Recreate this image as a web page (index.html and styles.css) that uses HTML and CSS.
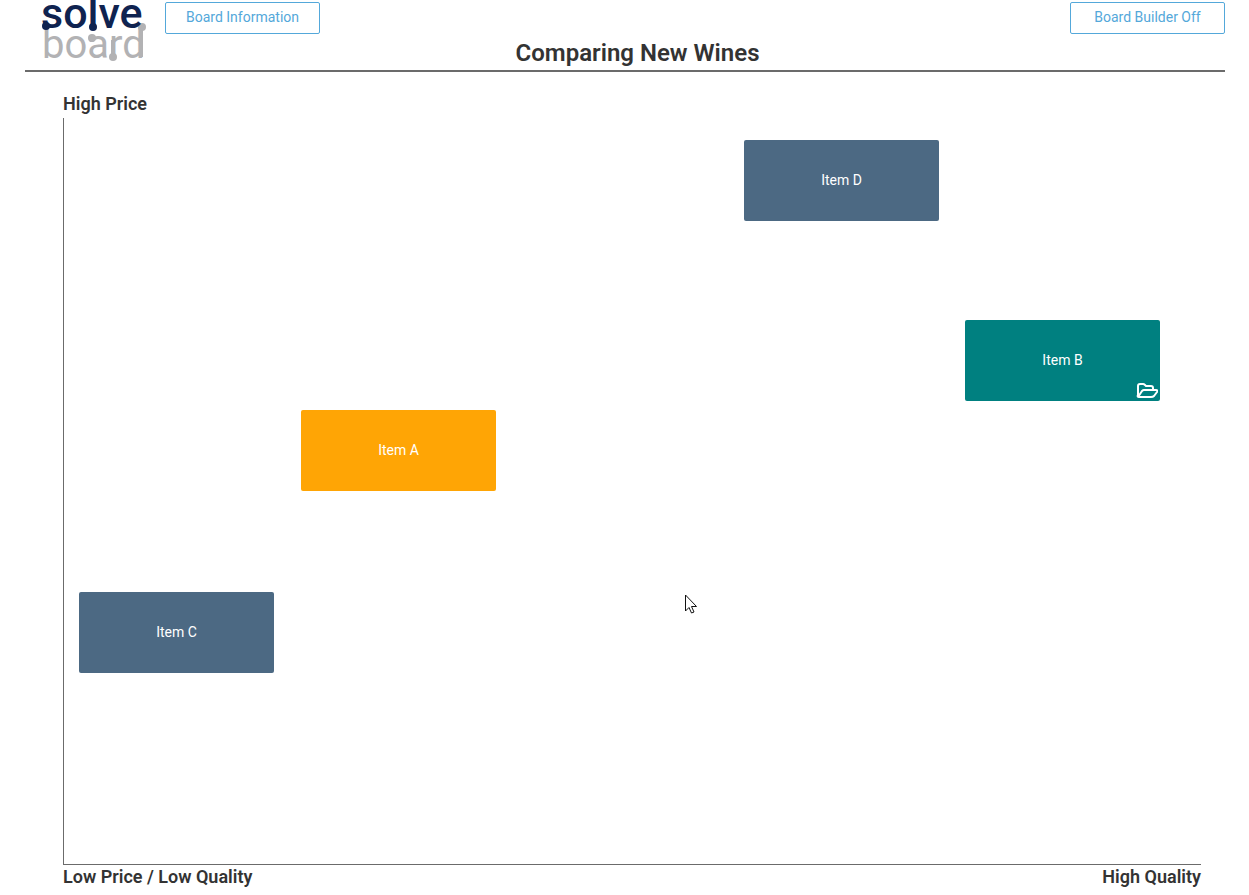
FILE: index.html
```html
<!DOCTYPE html>
<html lang="en">

<head>
    <meta charset="UTF-8">
    <meta name="viewport" content="width=device-width, initial-scale=1.0">
    <title>Comparing New Wines</title>
    <link rel="stylesheet" href="styles.css">
</head>

<body>

    <header class="header">
        <a class="logo" href="#" aria-label="solveboard">
            <svg width="110" height="64" viewBox="0 0 110 64">
                <g class="logo-board">
                    <text x="2" y="58">board</text>
                    <path d="M73 40V57M101 28V57" />
                    <circle cx="102" cy="27" r="4" />
                    <circle cx="52" cy="38" r="4" />
                    <circle cx="73" cy="57" r="4" />
                </g>
                <g class="logo-solve">
                    <text x="1" y="28">solve</text>
                    <path d="M53 0V27" />
                    <circle cx="6" cy="26" r="4" />
                    <circle cx="53" cy="27" r="4" />
                </g>
            </svg>
        </a>
        <button class="btn btn-info" type="button">Board Information</button>
        <button class="btn btn-builder" type="button">Board Builder Off</button>
        <h1 class="title">Comparing New Wines</h1>
    </header>

    <main class="board">
        <h2 class="axis-label">High Price</h2>

        <div class="plot">
            <div class="item item-a">Item A</div>
            <div class="item item-b">
                Item B
                <button class="folder" type="button" aria-label="Open folder">
                    <svg width="22" height="16" viewBox="0 0 22 16">
                        <path d="M2 13V3Q2 1 4 1H7Q8 1 9 2L10 3H15Q17 3 17 5V7M2 14L6 8Q7 7 8 7H20Q22 7 21 9L18 13Q17 14 15 14H3Q1 14 2 12" />
                    </svg>
                </button>
            </div>
            <div class="item item-c">Item C</div>
            <div class="item item-d">Item D</div>

            <svg class="pointer" width="14" height="21" viewBox="0 0 14 21">
                <path d="M1.500 1V17L5 13.500L7.500 19L10 18L7.500 12.500H12.500Z" />
            </svg>
        </div>

        <div class="axis-bottom">
            <h2 class="axis-label">Low Price / Low Quality</h2>
            <h2 class="axis-label">High Quality</h2>
        </div>
    </main>

</body>

</html>
```

FILE: styles.css
```css
* {
    box-sizing: border-box;
}

body {
    font-family: Roboto, Arial, sans-serif;
    font-size: 14px;
    color: #333;
    background-color: #fff;
    display: flex;
    flex-direction: column;
    min-height: 100vh;
    margin: 0;
    padding: 0 24px 0 25px;
}

h1,
h2 {
    margin: 0;
}

/* Header */
.header {
    display: grid;
    grid-template-columns: 140px auto 1fr;
    grid-template-rows: 36px 34px;
    border-bottom: 2px solid #6b6b6b;
}

.logo {
    grid-column: 1;
    grid-row: 1 / 3;
    padding-left: 15px;
}

.logo svg {
    display: block;
}

.logo text {
    font-family: Roboto, sans-serif;
}

.logo-solve {
    fill: #0f2350;
    font-size: 43px;
    font-weight: 500;
}

.logo-solve path {
    stroke: #0f2350;
    stroke-width: 4;
}

.logo-board {
    fill: #b2b2b4;
    font-size: 40px;
}

.logo-board path {
    stroke: #b2b2b4;
    stroke-width: 4;
}

.btn {
    width: 155px;
    height: 32px;
    margin-top: 2px;
    padding: 0 0 2px;
    font-family: inherit;
    font-size: 14px;
    color: #54a8da;
    background-color: #fff;
    border: 1px solid #54a8da;
    border-radius: 2px;
    cursor: pointer;
}

.btn-builder {
    justify-self: end;
}

.title {
    grid-column: 1 / -1;
    grid-row: 2;
    padding-left: 25px;
    font-size: 24px;
    font-weight: 600;
    line-height: 34px;
    text-align: center;
}

/* Board */
.board {
    flex: 1;
    display: flex;
    flex-direction: column;
    padding: 20px 24px 6px 38px;
}

.axis-label {
    font-size: 18px;
    font-weight: 600;
    line-height: 24px;
}

.plot {
    position: relative;
    flex: 1;
    min-height: 600px;
    margin-top: 2px;
    border-left: 1px solid #6b6b6b;
    border-bottom: 1px solid #6b6b6b;
}

.axis-bottom {
    display: flex;
    justify-content: space-between;
}

.item {
    position: absolute;
    display: flex;
    justify-content: center;
    align-items: center;
    width: 195px;
    height: 81px;
    padding-bottom: 2px;
    color: #fff;
    background-color: #4c6983;
    border-radius: 2px;
}

.item-a {
    left: 237px;
    top: 292px;
    background-color: #ffa505;
}

.item-b {
    left: 901px;
    top: 202px;
    background-color: #008080;
}

.item-c {
    left: 15px;
    top: 474px;
}

.item-d {
    left: 680px;
    top: 22px;
}

.folder {
    position: absolute;
    right: 2px;
    bottom: 2px;
    padding: 0;
    border: none;
    background: none;
    cursor: pointer;
}

.folder svg {
    display: block;
    fill: none;
    stroke: #fff;
    stroke-width: 2;
    stroke-linejoin: round;
}

.pointer {
    position: absolute;
    left: 620px;
    top: 476px;
    fill: #fff;
    stroke: #111;
}
```
